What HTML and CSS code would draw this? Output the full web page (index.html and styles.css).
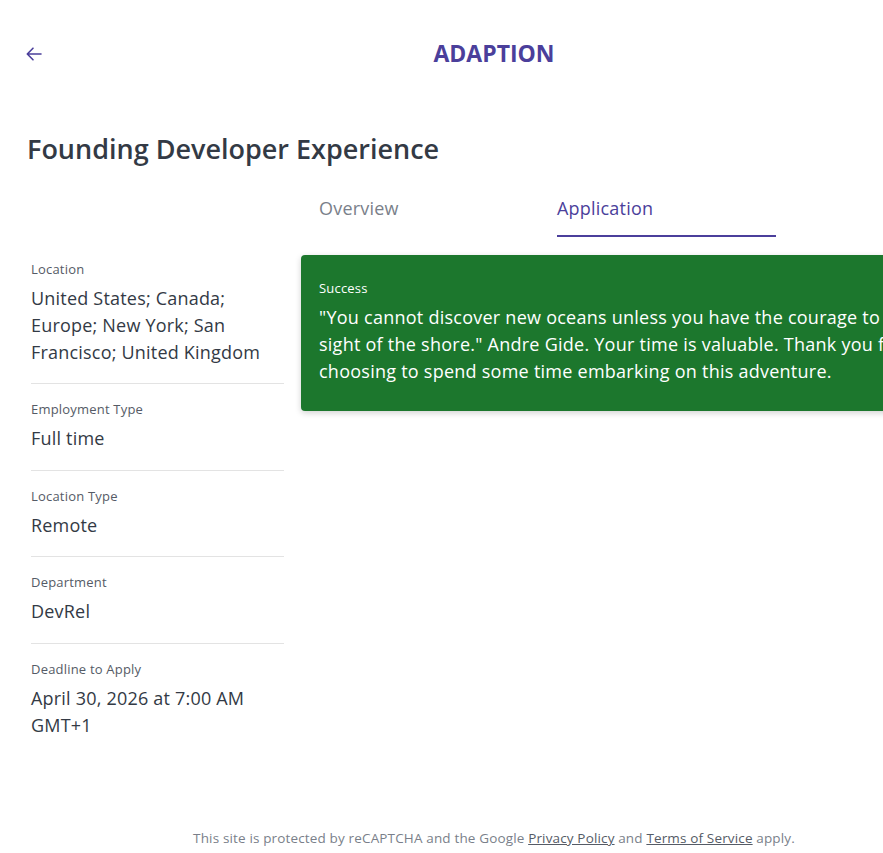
FILE: index.html
```html
<!DOCTYPE html>
<html lang="en">
<head>
<meta charset="utf-8">
<title>Founding Developer Experience - Adaption</title>
<link rel="stylesheet" href="styles.css">
</head>
<body>
<div class="page">
  <header class="topbar">
    <a class="back" href="#" aria-label="Back">
      <svg width="18" height="18" viewBox="0 0 18 18" fill="none" stroke="#4b3f9b" stroke-width="1.6" stroke-linecap="round" stroke-linejoin="round"><path d="M16 9H2.5M8 3.2L2.3 9L8 14.8"/></svg>
    </a>
    <div class="brand">ADAPTION</div>
  </header>

  <h1 class="title">Founding Developer Experience</h1>

  <div class="layout">
    <aside class="sidebar">
      <div class="meta">
        <div class="meta-label">Location</div>
        <div class="meta-value">United States; Canada; Europe; New York; San Francisco; United Kingdom</div>
      </div>
      <div class="meta">
        <div class="meta-label">Employment Type</div>
        <div class="meta-value">Full time</div>
      </div>
      <div class="meta">
        <div class="meta-label">Location Type</div>
        <div class="meta-value">Remote</div>
      </div>
      <div class="meta">
        <div class="meta-label">Department</div>
        <div class="meta-value">DevRel</div>
      </div>
      <div class="meta last">
        <div class="meta-label">Deadline to Apply</div>
        <div class="meta-value">April 30, 2026 at 7:00 AM GMT+1</div>
      </div>
    </aside>

    <main class="main">
      <nav class="tabs">
        <a class="tab" href="#">Overview</a>
        <a class="tab active" href="#">Application</a>
      </nav>
      <div class="alert">
        <div class="alert-title">Success</div>
        <div class="alert-body">"You cannot discover new oceans unless you have the courage to lose sight of the shore." Andre Gide. Your time is valuable. Thank you for choosing to spend some time embarking on this adventure.</div>
      </div>
    </main>
  </div>

  <footer class="footer">This site is protected by reCAPTCHA and the Google <a href="#">Privacy Policy</a> and <a href="#">Terms of Service</a> apply.</footer>
</div>
</body>
</html>
```

FILE: styles.css
```css
html, body {
  margin: 0;
  padding: 0;
  overflow: hidden;
  background: #ffffff;
}
body {
  font-family: "Open Sans", "Liberation Sans", sans-serif;
  color: #333a45;
}
.page {
  width: 988px;
  padding: 0 27px;
  box-sizing: border-box;
}
.topbar {
  display: flex;
  align-items: center;
  justify-content: center;
  position: relative;
  height: 106px;
}
.back {
  position: absolute;
  left: -2px;
  top: 45px;
  display: flex;
}
.brand {
  font-size: 23px;
  font-weight: 700;
  color: #4b3f9b;
}
.title {
  margin: 0;
  font-size: 27px;
  font-weight: 600;
  color: #333a45;
  line-height: 34px;
  padding-top: 26px;
}
.layout {
  display: flex;
  gap: 17px;
  padding-top: 22px;
  padding-left: 4px;
}
.sidebar {
  width: 253px;
  flex: none;
  padding-top: 72px;
}
.meta {
  border-bottom: 1px solid #e3e3e3;
  padding: 16px 0 17.5px;
}
.meta:first-child { padding-top: 0; padding-bottom: 17px; }
.meta.last { border-bottom: none; }
.meta-label {
  font-size: 13px;
  color: #555b66;
  line-height: 18px;
  margin-bottom: 7px;
  letter-spacing: 0.2px;
}
.meta-value {
  font-size: 18px;
  letter-spacing: 0.2px;
  line-height: 27px;
  color: #333a45;
}
.main {
  flex: 1;
}
.tabs {
  display: flex;
  gap: 19px;
  padding-left: 18px;
}
.tab {
  width: 219px;
  height: 49px;
  font-size: 18px;
  letter-spacing: 0.2px;
  color: #7a7f8a;
  text-decoration: none;
  line-height: 24px;
  padding-top: 8px;
  box-sizing: border-box;
}
.tab.active {
  color: #4b3f9b;
  border-bottom: 2px solid #4b3f9b;
}
.alert {
  margin-top: 18px;
  background: #1c772d;
  color: #ffffff;
  border-radius: 4px;
  padding: 24px 18px 26px;
  box-shadow: 0 2px 6px rgba(0,0,0,0.18);
}
.alert-title {
  font-size: 13px;
  line-height: 18px;
  margin-bottom: 7px;
  letter-spacing: 0.2px;
}
.alert-body {
  font-size: 18px;
  letter-spacing: 0.25px;
  line-height: 27px;
}
.footer {
  text-align: center;
  font-size: 13.5px;
  letter-spacing: 0.15px;
  color: #7a7f8a;
  padding-top: 73px;
}
.footer a {
  color: #555b66;
  text-decoration: underline;
}
```
